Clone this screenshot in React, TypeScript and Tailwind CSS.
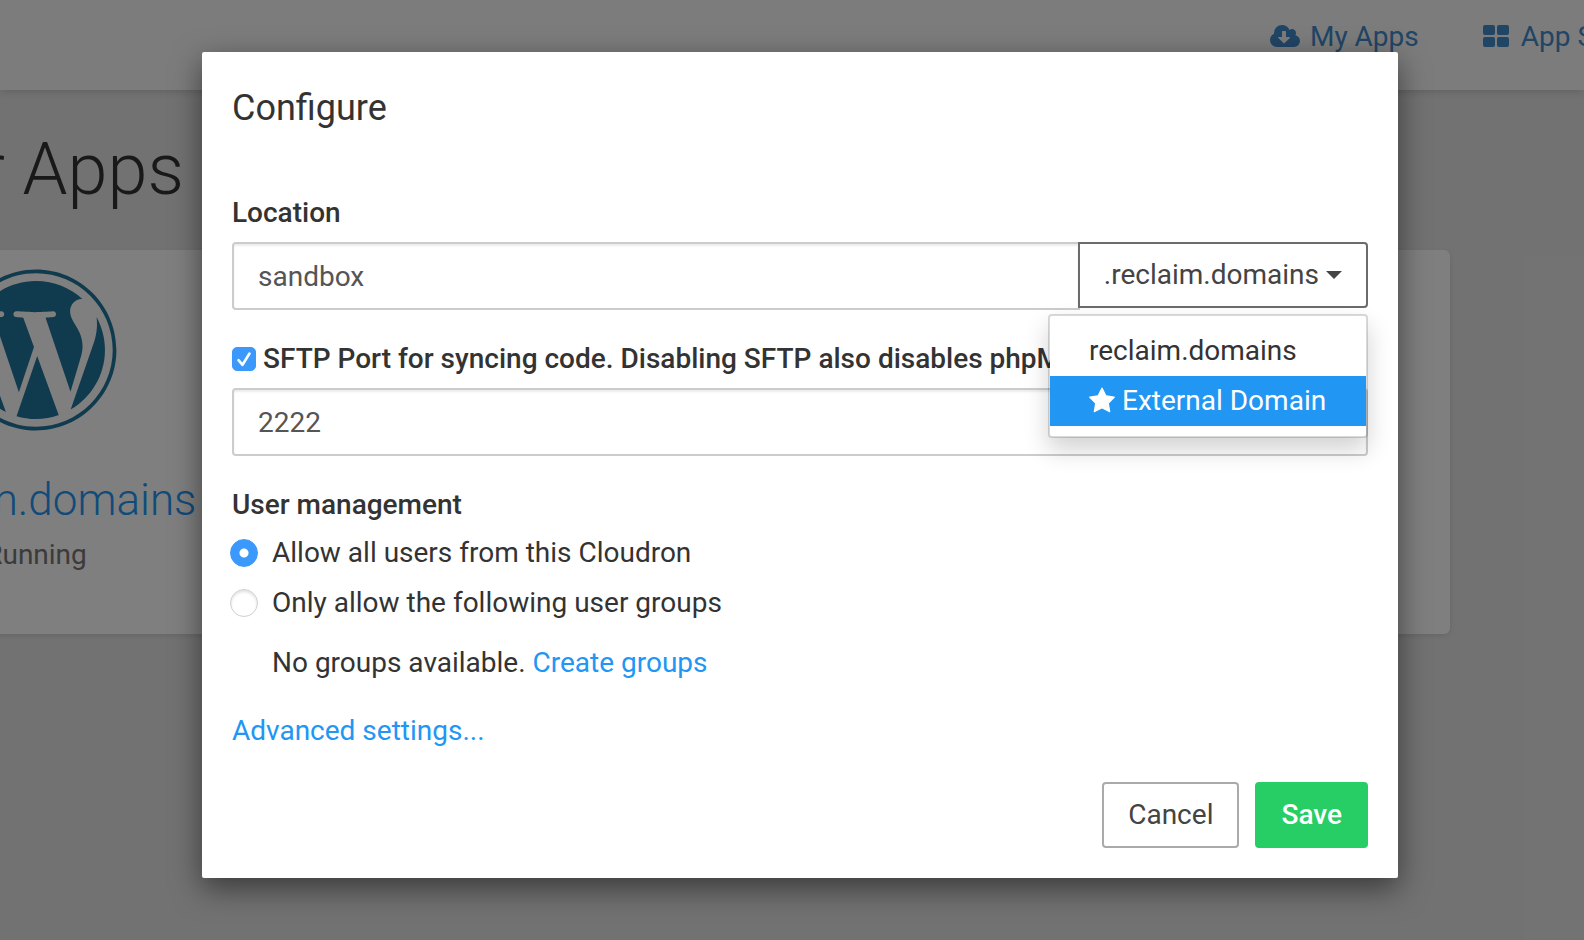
import { useState } from "react";
import { FaWordpress } from "react-icons/fa";

function CloudDownloadIcon() {
  return (
    <svg viewBox="0 0 1920 1792" className="h-7 w-[30px]" fill="currentColor" aria-hidden="true">
      <path d="M1280 928q0-14-9-23t-23-9h-224v-352q0-13-9.5-22.5t-22.5-9.5h-192q-13 0-22.5 9.5t-9.5 22.5v352h-224q-13 0-22.5 9.5t-9.5 22.5q0 14 9 23l352 352q9 9 23 9t23-9l351-351q10-12 10-24zm640 224q0 159-112.5 271.5t-271.5 112.5h-1088q-185 0-316.5-131.5t-131.5-316.5q0-130 70-240t188-165q-2-30-2-43 0-212 150-362t362-150q156 0 285.5 87t188.5 231q71-62 166-62 106 0 181 75t75 181q0 76-41 138 130 31 213.5 135.5t83.5 238.5z" />
    </svg>
  );
}

function GridIcon() {
  return (
    <svg viewBox="0 0 1792 1792" className="size-7" fill="currentColor" aria-hidden="true">
      <rect x="0" y="128" width="768" height="640" rx="128" />
      <rect x="896" y="128" width="768" height="640" rx="128" />
      <rect x="0" y="896" width="768" height="640" rx="128" />
      <rect x="896" y="896" width="768" height="640" rx="128" />
    </svg>
  );
}

function StarIcon() {
  return (
    <svg viewBox="64 0 1664 1792" className="h-7 w-[26px]" fill="currentColor" aria-hidden="true">
      <path d="M1728 647q0 22-26 48l-363 354 86 500q1 7 1 20 0 21-10.5 35.5t-30.5 14.5q-19 0-40-12l-449-236-449 236q-22 12-40 12-21 0-31.5-14.5t-10.5-35.5q0-6 2-20l86-500-364-354q-25-27-25-48 0-37 56-46l502-73 225-455q19-41 49-41t49 41l225 455 502 73q56 9 56 46z" />
    </svg>
  );
}

const inputClass =
  "w-full min-w-0 h-[68px] px-6 border-2 border-[#ccc] bg-white text-[#555] shadow-[inset_0_2px_2px_rgba(0,0,0,0.075)] outline-none";

const radioClass =
  "size-7 shrink-0 appearance-none rounded-full border border-[#d0d0d0] bg-white shadow-[inset_0_2px_3px_rgba(0,0,0,0.12)] checked:border-[#3b99fc] checked:bg-[radial-gradient(circle,#fff_4px,#3b99fc_5px)] checked:shadow-none";

export default function App() {
  const [location, setLocation] = useState("sandbox");
  const [sftp, setSftp] = useState(true);
  const [port, setPort] = useState("2222");
  const [access, setAccess] = useState("all");
  const [menuOpen, setMenuOpen] = useState(true);
  const [domain, setDomain] = useState(".reclaim.domains");

  function pickDomain(name: string) {
    setDomain(name);
    setMenuOpen(false);
  }

  return (
    <div className="relative min-h-screen overflow-hidden bg-[#e5e5e5] font-[Roboto,sans-serif] text-[28px] leading-10 text-[#333]">
      <header className="h-[90px] bg-[#f9f9f9] shadow-[0_2px_8px_rgba(0,0,0,0.15)]">
        <nav className="-mr-[59px] flex justify-end gap-16 pt-[17px] text-[#428bca]">
          <a href="#apps" className="flex items-center gap-2.5">
            <CloudDownloadIcon />
            My Apps
          </a>
          <a href="#store" className="flex items-center gap-2.5 whitespace-nowrap">
            <GridIcon />
            App Store
          </a>
        </nav>
      </header>

      <main className="-ml-[140px] mr-[134px]">
        <h1 className="py-8 text-[72px] leading-24 font-light">Your Apps</h1>
        <section className="h-96 rounded-md bg-white pt-[17px] shadow-[0_2px_6px_rgba(0,0,0,0.1)]">
          <div className="flex w-[352px] flex-col items-center">
            <FaWordpress className="size-[166px] text-[#21759b]" />
            <a href="#app" className="mt-[37px] text-[44px] leading-[60px] font-light text-[#2196f3]">
              reclaim.domains
            </a>
            <p className="mt-[5px] text-[#777]">Running</p>
          </div>
        </section>
      </main>

      <div className="absolute inset-0 flex items-start justify-center bg-black/50 pt-[52px] pl-4">
        <form
          role="dialog"
          aria-labelledby="dialog-title"
          onSubmit={(e) => e.preventDefault()}
          className="w-full max-w-[1196px] rounded-xs bg-white p-[30px] shadow-[0_10px_30px_rgba(0,0,0,0.5)]"
        >
          <h2 id="dialog-title" className="text-4xl leading-[52px]">
            Configure
          </h2>

          <div className="mt-[59px]">
            <label htmlFor="location" className="block font-medium">
              Location
            </label>
            <div className="relative mt-[9px] flex items-start">
              <input
                id="location"
                value={location}
                onChange={(e) => setLocation(e.target.value)}
                className={inputClass + " -mr-0.5 rounded-l-sm"}
              />
              <button
                type="button"
                aria-haspopup="menu"
                aria-expanded={menuOpen}
                onClick={() => setMenuOpen(!menuOpen)}
                className="relative flex h-[66px] shrink-0 items-center gap-[7px] rounded-r-sm border-2 border-[#6b6b6b] bg-white px-6 text-[#444]"
              >
                {domain}
                <svg viewBox="0 0 16 8" className="h-2 w-4" fill="currentColor" aria-hidden="true">
                  <path d="M0 0h16l-8 8z" />
                </svg>
              </button>
              {menuOpen && (
                <div
                  role="menu"
                  className="absolute top-full right-0 mt-1 w-80 rounded-sm border-2 border-black/15 bg-white bg-clip-padding py-2.5 shadow-[0_12px_24px_rgba(0,0,0,0.175)]"
                >
                  <button
                    type="button"
                    role="menuitem"
                    onClick={() => pickDomain(".reclaim.domains")}
                    className="block h-[50px] w-full px-[39px] text-left"
                  >
                    reclaim.domains
                  </button>
                  <button
                    type="button"
                    role="menuitem"
                    onClick={() => pickDomain("External Domain")}
                    className="flex h-[50px] w-full items-center gap-[7px] bg-[#2196f3] pl-[39px] whitespace-nowrap text-white"
                  >
                    <StarIcon />
                    External Domain
                  </button>
                </div>
              )}
            </div>
          </div>

          <div className="mt-[29px]">
            <div className="flex items-center gap-[7px] font-medium">
              <span className="relative flex">
                <input
                  id="sftp"
                  type="checkbox"
                  checked={sftp}
                  onChange={(e) => setSftp(e.target.checked)}
                  className="peer size-6 appearance-none rounded-[5px] border border-[#ccc] bg-white checked:border-[#3b99fc] checked:bg-[#3b99fc]"
                />
                <svg
                  viewBox="0 0 24 24"
                  className="pointer-events-none absolute inset-0 hidden size-6 peer-checked:block"
                  fill="none"
                  stroke="#fff"
                  strokeWidth="2.6"
                  strokeLinecap="round"
                  strokeLinejoin="round"
                >
                  <path d="M6.5 13.2l4 4.6L17.5 6.5" />
                </svg>
              </span>
              <label htmlFor="sftp">
                SFTP Port for syncing code. Disabling SFTP also disables phpMyAdmin access.
              </label>
            </div>
            <input
              aria-label="SFTP port"
              value={port}
              disabled={!sftp}
              onChange={(e) => setPort(e.target.value)}
              className={inputClass + " mt-[9px] block rounded-sm"}
            />
          </div>

          <fieldset className="mt-[29px]">
            <legend className="font-medium">User management</legend>
            <div className="-ml-0.5 mt-2 flex flex-col gap-2.5">
              <label className="flex items-center gap-3.5">
                <input
                  type="radio"
                  name="access"
                  checked={access === "all"}
                  onChange={() => setAccess("all")}
                  className={radioClass}
                />
                Allow all users from this Cloudron
              </label>
              <label className="flex items-center gap-3.5">
                <input
                  type="radio"
                  name="access"
                  checked={access === "groups"}
                  onChange={() => setAccess("groups")}
                  className={radioClass}
                />
                Only allow the following user groups
              </label>
            </div>
            <p className="mt-5 pl-10">
              No groups available.{" "}
              <a href="#groups" className="text-[#2196f3]">
                Create groups
              </a>
            </p>
          </fieldset>

          <a href="#advanced" className="mt-7 block text-[#2196f3]">
            Advanced settings...
          </a>

          <div className="mt-[31px] flex justify-end gap-4">
            <button
              type="button"
              className="h-[66px] rounded-sm border-2 border-[#aaa] bg-white px-6 text-[#444]"
            >
              Cancel
            </button>
            <button
              type="submit"
              className="h-[66px] rounded-sm border-2 border-[#27ce65] bg-[#27ce65] px-6 font-medium text-white"
            >
              Save
            </button>
          </div>
        </form>
      </div>
    </div>
  );
}
